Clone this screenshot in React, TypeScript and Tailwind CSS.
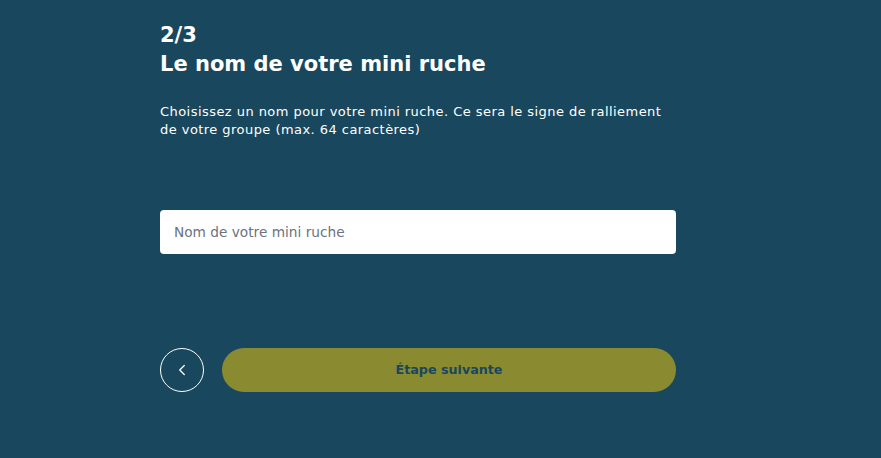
import { ChevronLeft } from 'lucide-react';

export default function App() {
  return (
    <div
      className="w-full h-[458px] bg-[#19475e] text-white overflow-hidden"
      style={{ fontFamily: '"DejaVu Sans", "Liberation Sans", sans-serif' }}
    >
      <div className="w-[516px] ml-[160px] pt-[21px] flex flex-col">
        {/* Heading */}
        <h1 className="text-[21px] leading-[29px] font-bold">
          <span className="block">2/3</span>
          <span className="block">Le nom de votre mini ruche</span>
        </h1>

        <p className="mt-[24px] max-w-[505px] text-[13px] leading-[18px] tracking-[0.45px] text-white">
          Choisissez un nom pour votre mini ruche. Ce sera le signe de ralliement de votre groupe (max. 64 caractères)
        </p>

        {/* Input */}
        <input
          type="text"
          placeholder="Nom de votre mini ruche"
          className="mt-[71px] h-[44px] w-full rounded-[4px] bg-white px-[14px] text-[13.7px] text-gray-800 placeholder:text-[#6b7280] outline-none"
        />

        {/* Actions */}
        <div className="mt-[94px] flex items-center gap-[18px]">
          <button className="w-[44px] h-[44px] shrink-0 rounded-full border border-white flex items-center justify-center">
            <ChevronLeft size={18} strokeWidth={1.75} className="text-white" />
          </button>
          <button className="flex-1 h-[44px] rounded-full bg-[#8a8b30] text-[#19475e] text-[12.7px] font-bold">
            Étape suivante
          </button>
        </div>
      </div>
    </div>
  );
}
